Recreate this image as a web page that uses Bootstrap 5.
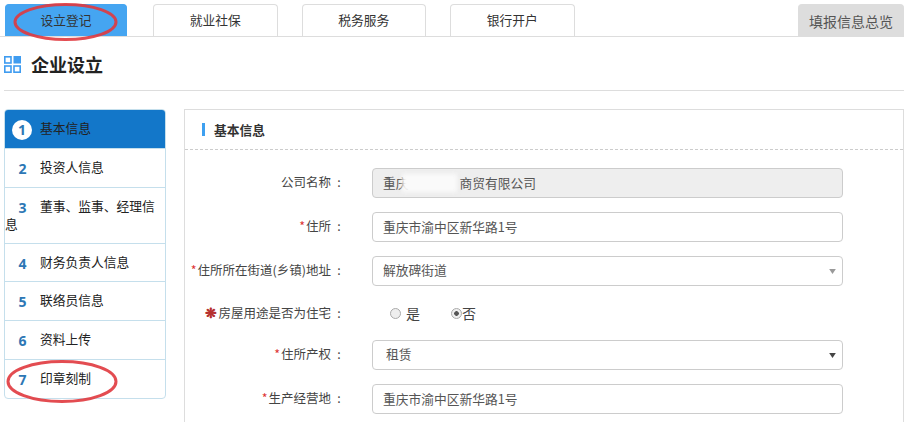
<!DOCTYPE html>
<html lang="zh">
<head>
<meta charset="utf-8">
<title>企业设立</title>
<link href="https://cdn.jsdelivr.net/npm/bootstrap@5.3.0/dist/css/bootstrap.min.css" rel="stylesheet">
<style>
html,body{height:422px;overflow:hidden;background:#fff}
body{font-family:"Microsoft YaHei","Noto Sans CJK SC","Liberation Sans",sans-serif;font-size:12.75px;color:#333;position:relative}
.page-wrap{padding:4px 7px 0 0}
.tab-bar{height:33px;border-bottom:1px solid #ddd;padding-left:5px;gap:24px}
.tab-item{width:124.5px;height:32px;line-height:30px;text-align:center;border:1px solid #ddd;border-bottom:0;border-radius:4px 4px 0 0;color:#333;text-decoration:none;font-size:12.75px}
.tab-item.on{background:#45a5f1;border-color:#45a5f1;width:122px;margin-right:2px}
.tab-item.summary{width:106px;margin-left:auto;background:#ddd;font-size:14px;color:#555;line-height:32px}
.head-row{margin-left:4px;height:54px;border-bottom:1px solid #ddd;gap:10px;padding-top:1px}
.head-row h1{font-size:18px;font-weight:700;color:#222;margin:0;line-height:1}
.content-row{margin:18px 0 0 4px;gap:18px;align-items:flex-start}
.step-list{width:162px;flex:none;border:1px solid #c5dfec;border-radius:4px;overflow:hidden}
.step-item{display:block;padding:9px 5px 11px 0;line-height:18px;color:#222;border-bottom:1px solid #c5dfec}
.step-item.tall{padding:9px 5px 10px 0}
.step-item.short{padding:9px 5px 10px 0}
.step-item:last-child{border-bottom:0}
.step-item.on{background:#1377c9}
.step-no{display:inline-block;width:35px;text-align:center;font-weight:700;font-size:14px;line-height:14px;color:#2d77b5;position:relative;top:2px;font-family:"Open Sans","Liberation Sans",sans-serif}
.step-no i{font-style:normal;display:block;width:20px;height:20px;line-height:20px;border-radius:50%;background:#fff;margin:-3px 0 -3px 7px}
.info-panel{flex:1;border:1px solid #ddd;border-bottom:0;height:313px}
.panel-head{height:40px;border-bottom:1px dashed #ccc;padding-left:17px;font-weight:700;font-size:12.75px;gap:9px;color:#333}
.panel-head b{display:block;width:3px;height:13px;background:#3ea0f0}
.panel-body{padding-top:18px}
.form-line{height:30px;margin-bottom:14px}
.form-line:last-child{margin-bottom:0}
.form-line.radio-line{height:26px}
.form-line label{width:159px;flex:none;text-align:right;margin-right:28px;color:#444;white-space:nowrap;padding-bottom:2px;font-size:12.5px}
.form-line label s{text-decoration:none;color:#d33;margin-right:1px}
.form-line label u{text-decoration:none;color:#b5302f;font-weight:700;font-size:14px;margin-right:1px}
.form-line label em{font-style:normal;display:inline-block;width:13px;text-align:center;padding-left:3px}
.txt-box{width:471px;position:relative}
.txt-box .form-control,.txt-box .form-select{height:30px;min-height:0;font-size:12.75px;padding:0 10px 2px;color:#555;border:1px solid #ccc;border-radius:4px;box-shadow:none;background-color:#fff}
.txt-box .form-control[disabled]{background:#eee;color:#555}
.txt-box .form-select{background-repeat:no-repeat;background-position:right 6px center;background-size:7px 5px;background-image:url("data:image/svg+xml,%3Csvg xmlns='http://www.w3.org/2000/svg' viewBox='0 0 8 6'%3E%3Cpath d='M0 0h8L4 6z' fill='%23999'/%3E%3C/svg%3E")}
.txt-box .form-select.dark{padding-left:13px;background-image:url("data:image/svg+xml,%3Csvg xmlns='http://www.w3.org/2000/svg' viewBox='0 0 8 6'%3E%3Cpath d='M0 0h8L4 6z' fill='%23444'/%3E%3C/svg%3E")}
.smear{position:absolute;left:30px;top:6px;width:55px;height:18px;background:#fafafa;filter:blur(2px);pointer-events:none}
.radio-set{margin-left:18px;padding-top:1px;color:#444}
.radio-set .form-check-input{width:11px;height:11px;margin:0;border:1px solid #aaa;background:#eee;box-shadow:none;float:none;flex:none}
.radio-set .form-check-input:checked{background:radial-gradient(circle,#555 0 2px,#eee 2.6px);border-color:#aaa}
.radio-one{gap:5px;margin-right:31px}
.radio-one.second{gap:0}
.radio-one span{font-size:14px}
.ring-mark{position:absolute;left:0;top:0;pointer-events:none}
</style>
</head>
<body>
<div class="page-wrap">
  <nav class="tab-bar d-flex align-items-end">
    <a class="tab-item on" href="#">设立登记</a>
    <a class="tab-item" href="#">就业社保</a>
    <a class="tab-item" href="#">税务服务</a>
    <a class="tab-item" href="#">银行开户</a>
    <a class="tab-item summary" href="#">填报信息总览</a>
  </nav>
  <div class="head-row d-flex align-items-center">
    <svg width="17" height="17" viewBox="0 0 17 17" aria-hidden="true"><g fill="none" stroke="#3f9cf0" stroke-width="1.6"><rect x=".8" y=".8" width="6.2" height="6.2"/><rect x=".8" y="10" width="6.2" height="6.2"/><rect x="10" y="10" width="6.2" height="6.2"/></g><rect x="9.5" y="0" width="7.5" height="7.5" fill="#3f9cf0"/></svg>
    <h1>企业设立</h1>
  </div>
  <div class="content-row d-flex">
    <div class="step-list">
      <div class="step-item on"><span class="step-no"><i>1</i></span>基本信息</div>
      <div class="step-item"><span class="step-no">2</span>投资人信息</div>
      <div class="step-item tall"><span class="step-no">3</span>董事、监事、经理信息</div>
      <div class="step-item short"><span class="step-no">4</span>财务负责人信息</div>
      <div class="step-item"><span class="step-no">5</span>联络员信息</div>
      <div class="step-item"><span class="step-no">6</span>资料上传</div>
      <div class="step-item"><span class="step-no">7</span>印章刻制</div>
    </div>
    <div class="info-panel">
      <div class="panel-head d-flex align-items-center"><b></b>基本信息</div>
      <div class="panel-body">
        <div class="form-line d-flex align-items-center">
          <label>公司名称<em>:</em></label>
          <div class="txt-box"><input class="form-control" disabled value="重庆　　　　商贸有限公司"><span class="smear"></span></div>
        </div>
        <div class="form-line d-flex align-items-center">
          <label><s>*</s>住所<em>:</em></label>
          <div class="txt-box"><input class="form-control" value="重庆市渝中区新华路1号"></div>
        </div>
        <div class="form-line d-flex align-items-center">
          <label><s>*</s>住所所在街道(乡镇)地址<em>:</em></label>
          <div class="txt-box"><select class="form-select"><option>解放碑街道</option></select></div>
        </div>
        <div class="form-line radio-line d-flex align-items-center">
          <label><u>❋</u>房屋用途是否为住宅<em>:</em></label>
          <div class="radio-set d-flex align-items-center">
            <div class="radio-one d-flex align-items-center"><input class="form-check-input" type="radio" name="zz"><span>是</span></div>
            <div class="radio-one second d-flex align-items-center"><input class="form-check-input" type="radio" name="zz" checked><span>否</span></div>
          </div>
        </div>
        <div class="form-line d-flex align-items-center">
          <label><s>*</s>住所产权<em>:</em></label>
          <div class="txt-box"><select class="form-select dark"><option>租赁</option></select></div>
        </div>
        <div class="form-line d-flex align-items-center">
          <label><s>*</s>生产经营地<em>:</em></label>
          <div class="txt-box"><input class="form-control" value="重庆市渝中区新华路1号"></div>
        </div>
      </div>
    </div>
  </div>
</div>
<svg class="ring-mark" width="911" height="422" aria-hidden="true"><g fill="none" stroke="#e0393e" stroke-width="3" opacity=".9"><ellipse cx="65.5" cy="22" rx="50.5" ry="17.5"/><ellipse cx="62" cy="381.5" rx="54" ry="20"/></g></svg>
</body>
</html>
